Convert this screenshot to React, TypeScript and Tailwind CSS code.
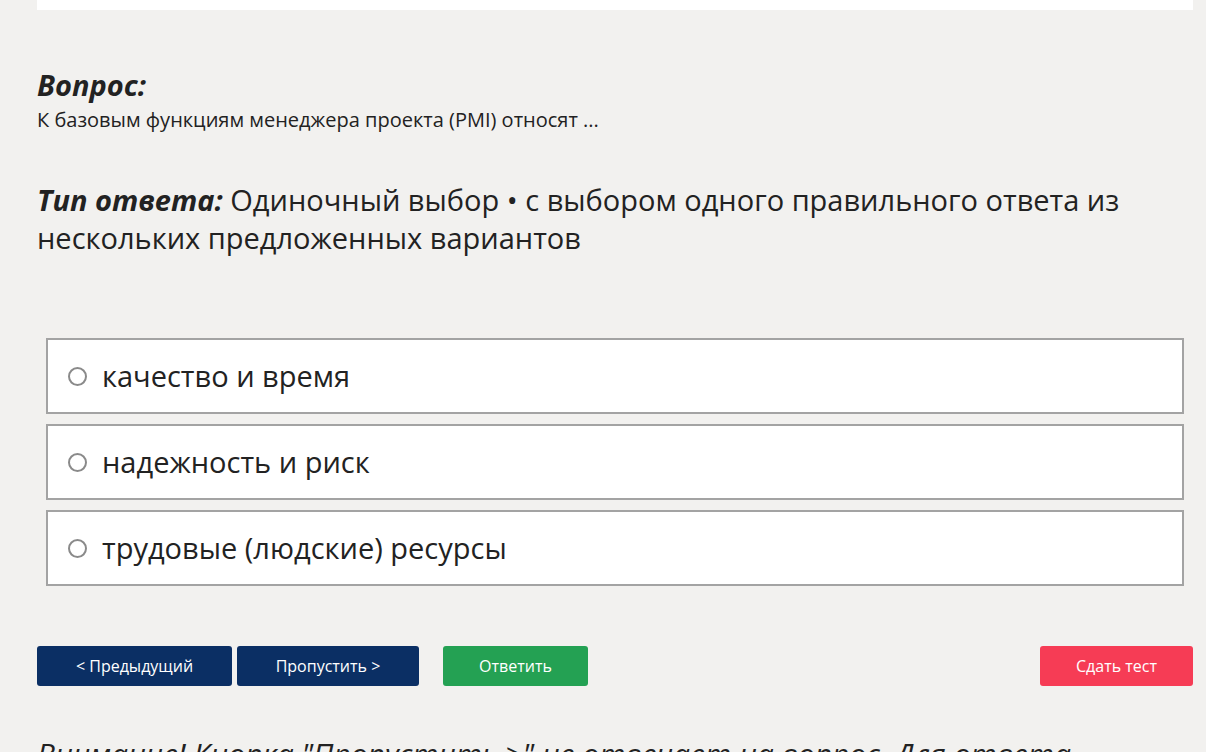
import React from "react";

const options = ["качество и время", "надежность и риск", "трудовые (людские) ресурсы"];

export default function App() {
  return (
    <div
      className="w-[1206px] h-[752px] overflow-hidden bg-[#f2f1ef] text-[#222]"
      style={{ fontFamily: '"Open Sans", "Noto Sans", sans-serif' }}
    >
      <div className="pl-[37px] pr-[13px]">
        <div className="h-[10px] bg-white" />
        <div className="pt-[56px]">
          <div className="text-[29px] leading-[38px] font-bold italic text-[#222]">Вопрос:</div>
          <div className="text-[20px] leading-[26px] text-[#222] mt-[3px]">
            К базовым функциям менеджера проекта (PMI) относят ...
          </div>
        </div>
        <div className="mt-[48px] text-[29px] leading-[38px] text-[#222]">
          <span className="font-bold italic">Тип ответа:</span> Одиночный выбор • с выбором одного правильного ответа из нескольких предложенных вариантов
        </div>
        <div className="mt-[81px] px-[9px] flex flex-col gap-[10px]">
          {options.map((o) => (
            <div
              key={o}
              className="h-[76px] bg-white border-2 border-[#a3a3a3] flex items-center pl-[20px]"
            >
              <span className="w-[19px] h-[19px] rounded-full border-2 border-[#8a8a8a] bg-white shrink-0" />
              <span className="ml-[15px] text-[29px] leading-[38px] text-[#222]">{o}</span>
            </div>
          ))}
        </div>
        <div className="mt-[60px] flex items-center">
          <button className="w-[195px] h-[40px] rounded-[3px] bg-[#0b2f64] text-white text-[16px]">
            &lt; Предыдущий
          </button>
          <button className="ml-[5px] w-[182px] h-[40px] rounded-[3px] bg-[#0b2f64] text-white text-[16px]">
            Пропустить &gt;
          </button>
          <button className="ml-[24px] w-[145px] h-[40px] rounded-[3px] bg-[#24a153] text-white text-[16px]">
            Ответить
          </button>
          <div className="flex-1" />
          <button className="w-[153px] h-[40px] rounded-[3px] bg-[#f63c55] text-white text-[16px]">
            Сдать тест
          </button>
        </div>
        <div className="mt-[48px] text-[30px] leading-[40px] italic text-[#222]">
          Внимание! Кнопка "Пропустить &gt;" не отвечает на вопрос. Для ответа нажмите кнопку "Ответить".
        </div>
      </div>
    </div>
  );
}
